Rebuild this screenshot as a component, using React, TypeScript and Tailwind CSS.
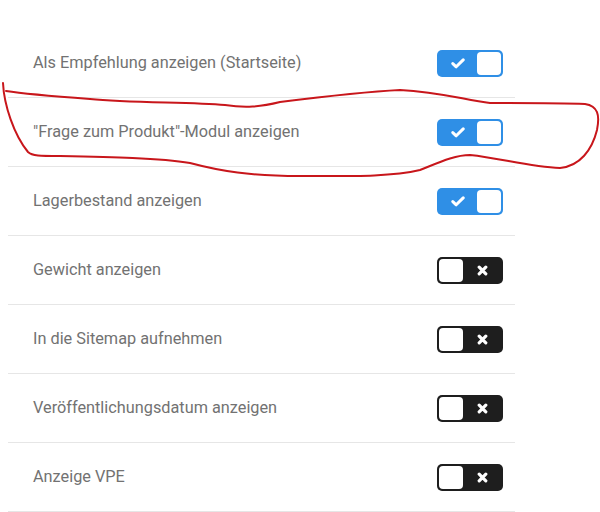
const settings = [
  { label: "Als Empfehlung anzeigen (Startseite)", on: true },
  { label: "\"Frage zum Produkt\"-Modul anzeigen", on: true },
  { label: "Lagerbestand anzeigen", on: true },
  { label: "Gewicht anzeigen", on: false },
  { label: "In die Sitemap aufnehmen", on: false },
  { label: "Veröffentlichungsdatum anzeigen", on: false },
  { label: "Anzeige VPE", on: false },
];

function Toggle({ on }: { on: boolean }) {
  if (on) {
    return (
      <div className="flex h-[27px] w-[66px] items-center rounded-[5px] bg-[#2f8fe6] p-[2px]">
        <div className="flex flex-1 items-center justify-center">
          <svg width="14" height="11" viewBox="0 0 14 11">
            <path
              d="M1.8 5.6 L5.2 8.8 L12.2 1.9"
              fill="none"
              stroke="white"
              strokeWidth="3"
              strokeLinecap="round"
              strokeLinejoin="round"
            />
          </svg>
        </div>
        <div className="h-[23px] w-[24px] rounded-[4px] bg-white" />
      </div>
    );
  }
  return (
    <div className="flex h-[27px] w-[66px] items-center rounded-[5px] bg-[#1e1e1e] p-[2px]">
      <div className="h-[23px] w-[24px] rounded-[4px] bg-white" />
      <div className="flex flex-1 items-center justify-center">
        <svg width="11" height="11" viewBox="0 0 11 11">
          <path
            d="M2.2 2.2 L8.8 8.8 M8.8 2.2 L2.2 8.8"
            fill="none"
            stroke="white"
            strokeWidth="3.2"
            strokeLinecap="round"
          />
        </svg>
      </div>
    </div>
  );
}

export default function App() {
  return (
    <div className="relative h-[512px] w-[600px] overflow-hidden bg-white pt-[29px] font-['Roboto',sans-serif]">
      <div className="ml-2 w-[507px]">
        {settings.map((s) => (
          <div
            key={s.label}
            className="flex h-[69px] items-center justify-between border-b border-[#e6e6e6] pl-[25px] pr-[12px]"
          >
            <span className="text-[16.3px] text-[#727272]">{s.label}</span>
            <Toggle on={s.on} />
          </div>
        ))}
      </div>

      {/* freehand marker around the second row */}
      <svg
        className="pointer-events-none absolute left-0 top-0"
        width="600"
        height="512"
        viewBox="0 0 600 512"
      >
        <path
          d="M3 83 C4 105 14 135 28 152 C32 156 40 156 60 156 C110 157 160 158 190 163 C220 171 250 176 300 176 C350 176 390 177 420 170 C440 162 455 155 470 155 C500 158 530 167 560 168 C580 166 592 150 597 130 C600 115 598 106 585 104 C560 103 520 103 490 103 C465 100 440 92 400 90 C360 92 320 97 280 102 C260 107 245 108 225 105 C190 102 130 103 90 99 C50 96 25 94 6 91"
          fill="none"
          stroke="#c8161b"
          strokeWidth="2"
          strokeLinecap="round"
          strokeLinejoin="round"
        />
      </svg>
    </div>
  );
}
